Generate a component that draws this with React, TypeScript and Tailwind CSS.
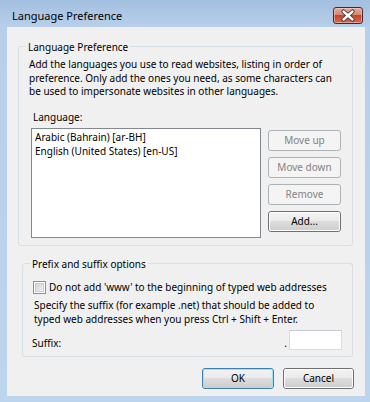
import React from "react";

const font = { fontFamily: '"Noto Sans", "Open Sans", sans-serif' };

function WinButton({
  children,
  disabled,
  isDefault,
  className = "",
}: {
  children: React.ReactNode;
  disabled?: boolean;
  isDefault?: boolean;
  className?: string;
}) {
  if (disabled) {
    return (
      <div
        className={`flex items-center justify-center rounded-[3px] border border-[#adb2b5] bg-[#f4f4f4] text-[#838383] ${className}`}
      >
        {children}
      </div>
    );
  }
  return (
    <div
      className={`rounded-[3px] border ${isDefault ? "border-[#3c7fb1]" : "border-[#707070]"} ${className}`}
    >
      <div
        className={`flex h-full w-full items-center justify-center rounded-[2px] border ${isDefault ? "border-[#9ee0f7]" : "border-[#fcfcfc]"} bg-[linear-gradient(to_bottom,#f2f2f2_0%,#ebebeb_45%,#dddddd_50%,#cfcfcf_100%)] text-black`}
      >
        {children}
      </div>
    </div>
  );
}

function GroupBox({
  title,
  className = "",
  children,
}: {
  title: string;
  className?: string;
  children: React.ReactNode;
}) {
  return (
    <div className={`relative rounded-[3px] border border-[#d5dfe5] ${className}`}>
      <span className="absolute left-[7px] top-[-8px] bg-[#f0f0f0] px-[2px] leading-[16px]">
        {title}
      </span>
      {children}
    </div>
  );
}

export default function App() {
  return (
    <div
      className="flex h-[402px] w-[370px] flex-col bg-[linear-gradient(to_bottom,#a3bfdf_0px,#b7cfea_27px,#bcd4ec_100%)] text-[10px] text-black"
      style={font}
    >
      {/* Title bar */}
      <div className="flex h-[27px] shrink-0 items-center justify-between pl-[12px] pr-[7px] pt-[4px]">
        <span className="text-[11px] leading-[16px] text-black">Language Preference</span>
        <div className="h-[17px] w-[30px] rounded-[3px] border border-[#3f2a33] bg-[linear-gradient(to_bottom,#e9a99a_0%,#d88571_45%,#c7452e_50%,#cf6b52_100%)] shadow-[inset_0_0_0_1px_rgba(255,220,210,0.5)]">
          <svg width="28" height="15" viewBox="0 0 28 15" className="block">
            <path
              d="M9.5 3.5 L18.5 11.5 M18.5 3.5 L9.5 11.5"
              stroke="#4a2a2a"
              strokeWidth="4.2"
              strokeLinecap="round"
              fill="none"
            />
            <path
              d="M9.5 3.5 L18.5 11.5 M18.5 3.5 L9.5 11.5"
              stroke="#ffffff"
              strokeWidth="2.4"
              strokeLinecap="round"
              fill="none"
            />
          </svg>
        </div>
      </div>

      {/* Client area */}
      <div className="mb-[6px] ml-[7px] mr-[5px] flex flex-1 flex-col bg-[#f0f0f0]">
        <GroupBox title="Language Preference" className="ml-[11px] mr-[12px] mt-[19px] h-[200px]">
          <div className="pl-[10px] pt-[11px]">
            <p className="whitespace-nowrap leading-[13.5px]">
              Add the languages you use to read websites, listing in order of
              <br />
              preference. Only add the ones you need, as some characters can
              <br />
              be used to impersonate websites in other languages.
            </p>
            <div className="ml-[4px] mt-[11px] leading-[14px]">Language:</div>
          </div>
          <div className="mt-[4px] flex pl-[12px]">
            <div className="h-[110px] w-[230px] border border-[#828790] bg-white px-[3px] pt-[1px] leading-[14px]">
              <div>Arabic (Bahrain) [ar-BH]</div>
              <div>English (United States) [en-US]</div>
            </div>
            <div className="ml-[7px] mt-[2px] flex w-[73px] flex-col gap-[6px]">
              <WinButton disabled className="h-[21px]">Move up</WinButton>
              <WinButton disabled className="h-[21px]">Move down</WinButton>
              <WinButton disabled className="h-[21px]">Remove</WinButton>
              <WinButton className="h-[21px]">Add...</WinButton>
            </div>
          </div>
        </GroupBox>

        <GroupBox title="Prefix and suffix options" className="ml-[15px] mr-[12px] mt-[17px] h-[94px]">
          <div className="pl-[10px] pr-[10px] pt-[16px]">
            <div className="flex items-center">
              <div className="h-[13px] w-[13px] border border-[#8f8f8f] bg-white p-[1px]">
                <div className="h-full w-full border border-[#c9ccd1] bg-[linear-gradient(135deg,#cfd3d8_0%,#f2f2f2_100%)]" />
              </div>
              <span className="ml-[3px] leading-[14px]">
                Do not add 'www' to the beginning of typed web addresses
              </span>
            </div>
            <p className="ml-[1px] mt-[4px] whitespace-nowrap leading-[14px]">
              Specify the suffix (for example .net) that should be added to
              <br />
              typed web addresses when you press Ctrl + Shift + Enter.
            </p>
            <div className="mt-[4px] flex items-end">
              <span className="-ml-[1px] leading-[14px]">Suffix:</span>
              <span className="ml-auto mr-[2px] leading-[14px]">.</span>
              <div className="h-[20px] w-[53px] border border-[#d9dce0] border-t-[#c8ccd2] bg-white" />
            </div>
          </div>
        </GroupBox>

        <div className="mr-[11px] mt-[11px] flex justify-end gap-[9px]">
          <WinButton isDefault className="h-[21px] w-[72px]">OK</WinButton>
          <WinButton className="h-[21px] w-[71px]">Cancel</WinButton>
        </div>
      </div>
    </div>
  );
}
